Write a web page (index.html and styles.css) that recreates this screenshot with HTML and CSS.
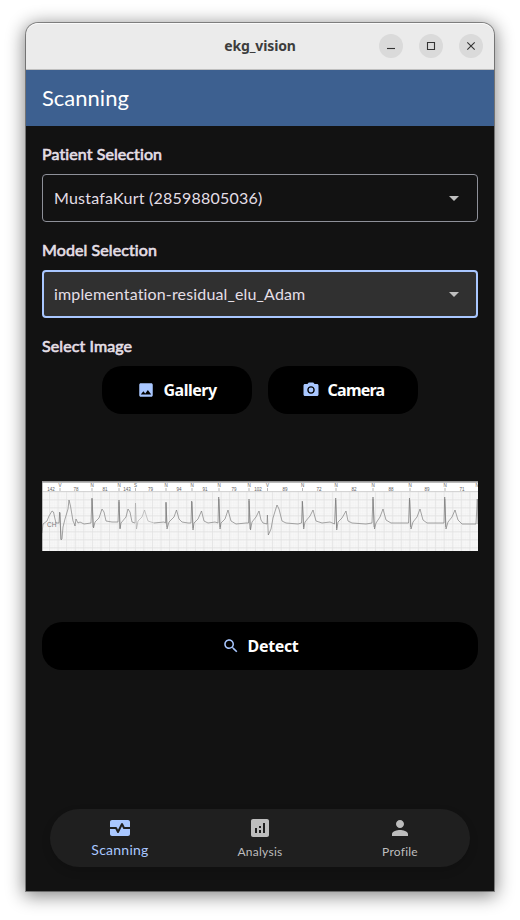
FILE: index.html
```html
<!DOCTYPE html>
<html lang="en">
<head>
<meta charset="utf-8">
<title>ekg_vision</title>
<link rel="stylesheet" href="styles.css">
</head>
<body>
<div class="window">
  <header class="titlebar">
    <span class="title">ekg_vision</span>
    <div class="controls">
      <span class="control"><svg viewBox="0 0 24 24"><path d="M8 14.5h8"/></svg></span>
      <span class="control"><svg viewBox="0 0 24 24"><path d="M8.5 8.5h7v7h-7z"/></svg></span>
      <span class="control"><svg viewBox="0 0 24 24"><path d="M8.3 8.3l7.4 7.4M15.7 8.3l-7.4 7.4"/></svg></span>
    </div>
  </header>
  <div class="appbar"><h1>Scanning</h1></div>
  <main class="content">
    <h2 class="label patient-label">Patient Selection</h2>
    <div class="select"><span class="patient">MustafaKurt (28598805036)</span><svg class="arrow" viewBox="0 0 24 24"><path d="M7 10l5 5 5-5z"/></svg></div>
    <h2 class="label model-label">Model Selection</h2>
    <div class="select focused"><span class="model">implementation-residual_elu_Adam</span><svg class="arrow" viewBox="0 0 24 24"><path d="M7 10l5 5 5-5z"/></svg></div>
    <h2 class="label image-label">Select Image</h2>
    <div class="sources">
      <button class="button"><svg viewBox="0 0 24 24"><path d="M21 19V5c0-1.1-.9-2-2-2H5c-1.1 0-2 .9-2 2v14c0 1.1.9 2 2 2h14c1.1 0 2-.9 2-2zM8.500 13.500l2.500 3.010L14.500 12l4.500 6H5l3.500-4.500z"/></svg><span class="gallery">Gallery</span></button>
      <button class="button"><svg viewBox="0 0 24 24"><path d="M9 2L7.170 4H4c-1.100 0-2 .9-2 2v12c0 1.100.9 2 2 2h16c1.100 0 2-.9 2-2V6c0-1.100-.9-2-2-2h-3.170L15 2H9zm3 15c-2.760 0-5-2.240-5-5s2.240-5 5-5 5 2.240 5 5-2.240 5-5 5z"/><circle cx="12" cy="12" r="3.200"/></svg><span class="camera">Camera</span></button>
    </div>
    <svg class="ekg" viewBox="0 0 436 70">
      <defs>
        <pattern id="minor" width="1.72" height="1.6" patternUnits="userSpaceOnUse"><path d="M0 0H1.72M0 0V1.6" stroke="#eee" stroke-width=".5" fill="none"/></pattern>
        <pattern id="major" width="8.58" height="8" y="2.3" patternUnits="userSpaceOnUse" x="7"><path d="M.5 0V8M0 .5H8.58" stroke="#e1e1e1" stroke-width=".8" fill="none"/></pattern>
      </defs>
      <rect width="436" height="70" fill="#fff"/>
      <rect y="10" width="436" height="60" fill="#f8f8f8"/>
      <rect y="10" width="436" height="60" fill="url(#minor)"/>
      <rect y="10" width="436" height="60" fill="url(#major)"/>
      <path d="M0 .9H436" stroke="#777" stroke-width="1.4"/>
      <path d="M0 10.500H436" stroke="#ccc" stroke-width=".7"/>
      <path d="M.4 1V70" stroke="#999" stroke-width=".7"/>
      <g class="marks">
        <text x="18" y="6">V</text><text x="50" y="6">N</text><text x="77" y="6">N</text><text x="93.500" y="6">S</text><text x="124" y="6">N</text><text x="150" y="6">N</text><text x="177" y="6">N</text><text x="207" y="6">N</text><text x="225.500" y="6">V</text><text x="260.500" y="6">N</text><text x="294" y="6">N</text><text x="331" y="6">N</text><text x="368" y="6">N</text><text x="403" y="6">N</text><text x="435" y="6">N</text>
        <text x="9" y="10">142</text><text x="34" y="10">78</text><text x="63" y="10">81</text><text x="85" y="10">143</text><text x="108.500" y="10">79</text><text x="137" y="10">94</text><text x="163" y="10">91</text><text x="192" y="10">79</text><text x="216" y="10">102</text><text x="243" y="10">89</text><text x="277" y="10">72</text><text x="312" y="10">82</text><text x="349" y="10">88</text><text x="385" y="10">89</text><text x="420" y="10">71</text>
      </g>
      <path class="ticks" d="M18 7v3M50 7v3M77 7v3M93.500 7v3M124 7v3M150 7v3M177 7v3M207 7v3M225.500 7v3M260.500 7v3M294 7v3M331 7v3M368 7v3M403 7v3"/>
      <text class="channel" x="5" y="45.500">CH</text>
      <path class="trace" d="M0 52L1 43 5 40 7 35 10 30 11.500 31 13 38 14 42 17 42 17.700 31 19 59 20 58 21 46 23 38 26 28 27 19 28.500 25 31 40 32 42 33 45 34 38 36 42 38 41 42 43 49 42 50 17 51.500 47 53 41 57 37 60 28 62 31 64 40 70 41 76 41 77 19 78 48 79 42 84 36 86 28 88 31 90 41 93 42"/>
      <path class="trace pale" d="M93 42L93.500 22 94.500 48 96 40 100 36 102.500 29 106 40 112 42"/>
      <path class="trace" d="M112 42L122 41 123.500 42 124 21 125 48 127 41 132 36 134.500 29 137 38 140 41 146 42 149 42 149.700 20 151 49 152 42 156 38 159.500 30 162 40 166 42 173 41 176 42 176.700 16 178 48 179 42 183 38 186 29 189 40 194 43 204 42 206.500 42 207 18 208.500 49 210 41 214 36 217 30 219 39 221 42 225 43 225.400 34 226.300 54 229 48 231 37 235 24 237 28 240 40 244 42 256 43 259.500 42 260.300 20 261.700 48 263 41 268 35 271 29 274 40 280 42 288 41 292.500 43 293.700 17 294.700 49 296 41 300 37 304 30 306 40 310 42 324 43 330 42 331 16 332.500 48 334 42 338 36 341 28 344 39 349 42 366.500 42 367.500 17 369 48 371 41 375 36 378 28 381 39 385 42 402 42 402.700 16 404 48 406 41 410 36 413 29 416 39 420 43 434 43 435.300 18 436 43"/>
      <path class="peaks" d="M18 32L19 58M50 18L51 46M77 21L78 47M124 22L125 46M150 21L151 47M177 18L178 46M207 20L208 48M260.500 21L261.500 46M293.800 19L294.600 47M331 18L332 46M367.700 19L368.500 46M402.900 18L403.700 46"/>
    </svg>
    <button class="button detect"><svg viewBox="0 0 24 24"><path d="M15.500 14h-.79l-.28-.27C15.410 12.590 16 11.110 16 9.500 16 5.910 13.090 3 9.500 3S3 5.910 3 9.500 5.910 16 9.500 16c1.610 0 3.090-.59 4.230-1.570l.27.28v.79l5 4.990L20.490 19l-4.990-5zm-6 0C7.010 14 5 11.990 5 9.500S7.010 5 9.500 5 14 7.010 14 9.500 11.990 14 9.500 14z"/></svg><span class="detect-text">Detect</span></button>
  </main>
  <nav class="nav">
    <a class="tab active"><svg viewBox="0 0 24 24"><path d="M15.110 12.450L14 10.240l-3.110 6.210c-.16.340-.51.550-.89.550s-.73-.21-.89-.55L7.380 13H2v5c0 1.100.9 2 2 2h16c1.100 0 2-.9 2-2v-5h-6c-.38 0-.73-.21-.89-.55z"/><path d="M20 4H4c-1.100 0-2 .9-2 2v5h6c.38 0 .73.210.89.550L10 13.760l3.110-6.210c.340-.68 1.450-.68 1.790 0L16.620 11H22V6c0-1.100-.9-2-2-2z"/></svg><span>Scanning</span></a>
    <a class="tab analysis"><svg viewBox="0 0 24 24"><path d="M19 3H5c-1.100 0-2 .9-2 2v14c0 1.100.9 2 2 2h14c1.100 0 2-.9 2-2V5c0-1.100-.9-2-2-2zM9 17H7v-5h2v5zm4 0h-2v-3h2v3zm0-5h-2v-2h2v2zm4 5h-2V7h2v10z"/></svg><span>Analysis</span></a>
    <a class="tab profile"><svg viewBox="0 0 24 24"><path d="M12 12c2.210 0 4-1.790 4-4s-1.790-4-4-4-4 1.790-4 4 1.790 4 4 4zm0 2c-2.670 0-8 1.340-8 4v2h16v-2c0-2.660-5.330-4-8-4z"/></svg><span>Profile</span></a>
  </nav>
</div>
</body>
</html>
```
FILE: styles.css
```css
* { box-sizing: border-box; }
body {
  margin: 0;
  height: 920px;
  padding: 23px 26px 29px;
  overflow: hidden;
  background: #fff;
  font-family: Lato, sans-serif;
  color: #e4dfe6;
}
.window {
  width: 468px;
  height: 868px;
  display: flex;
  flex-direction: column;
  border-radius: 12px 12px 0 0;
  background: #121212;
  box-shadow: 0 0 0 1px rgba(0,0,0,.38), 0 3px 18px 2px rgba(0,0,0,.48);
}
.titlebar {
  height: 47px;
  display: grid;
  grid-template-columns: 1fr auto 1fr;
  align-items: center;
  padding-right: 11px;
  padding-left: 11px;
  border-radius: 12px 12px 0 0;
  border-bottom: 1px solid #bfbfbf;
  background: #ebebeb;
  box-shadow: inset 0 1px #fafafa;
}
.title {
  grid-column: 2;
  padding-bottom: 2px;
  color: #3d3d3d;
  font: 700 14px "Noto Sans", sans-serif;
  letter-spacing: -.12px;
}
.controls { display: flex; justify-content: flex-end; gap: 16px; }
.control { width: 24px; height: 24px; border-radius: 50%; background: #dadada; }
.control svg { display: block; fill: none; stroke: #333; stroke-width: 1.1; }
.appbar { height: 56px; padding: 0 16px; display: flex; align-items: center; background: #3d6090; color: #fff; }
h1 { margin: 0; font-size: 22px; line-height: 28px; font-weight: 400; }
.content { display: flex; flex-direction: column; padding: 16px 16px 0; }
.label { margin: 0 0 8px; height: 24px; line-height: 23px; font-size: 16px; font-weight: 400; letter-spacing: .1px; -webkit-text-stroke: .65px currentColor; white-space: nowrap; }
.select {
  height: 48px;
  margin-bottom: 16px;
  display: flex;
  align-items: center;
  justify-content: space-between;
  padding: 0 11px;
  border: 1px solid #8e9099;
  border-radius: 4px;
  font-size: 16px;
}
.select span { padding-bottom: 2px; }
.patient { letter-spacing: .23px; }
.model { letter-spacing: .15px; }
.focused { border: 2px solid #a9c7ff; background: #303030; padding: 0 10px; }
.arrow { width: 24px; height: 24px; fill: #bfbfbf; }
.sources { display: flex; justify-content: center; gap: 16px; }
.button {
  width: 150px;
  height: 48px;
  display: flex;
  align-items: center;
  justify-content: center;
  gap: 8px;
  padding: 0;
  border: 0;
  border-radius: 20px;
  background: #000;
  color: #fff;
  font: 700 16px "Noto Sans", sans-serif;
}
.button svg { width: 18px; height: 18px; fill: #a9c7ff; }
.gallery { letter-spacing: -.5px; }
.camera { letter-spacing: -.75px; }
.detect-text { letter-spacing: -.35px; }
.ekg { display: block; width: 436px; height: 70px; margin: 67px 0 71px; }
.marks { font: 4.5px "Liberation Sans", sans-serif; fill: #555; text-anchor: middle; opacity: .95; }
.channel { font: 6.5px "Liberation Sans", sans-serif; fill: #777; opacity: .95; }
.trace { fill: none; stroke: #777; stroke-width: .65; }
.pale { stroke: #aaa; }
.peaks { fill: none; stroke: #777; stroke-width: .6; }
.ticks { stroke: #888; stroke-width: .6; }
.detect { width: 100%; }
.nav { width: 420px; height: 58px; display: flex; margin: auto auto 24px; border-radius: 29px; background: #1f1f1f; box-shadow: 0 4px 10px rgba(0,0,0,.14); }
.tab { flex: 1; display: flex; flex-direction: column; align-items: center; padding-top: 7px; color: #bdbdbd; font-size: 12px; line-height: 18px; letter-spacing: .25px; }
.tab svg { width: 24px; height: 24px; fill: currentColor; }
.tab span { margin-top: 3px; }
.active { color: #a9c7ff; font-size: 14px; }
.active span { margin-top: 1px; }
```
